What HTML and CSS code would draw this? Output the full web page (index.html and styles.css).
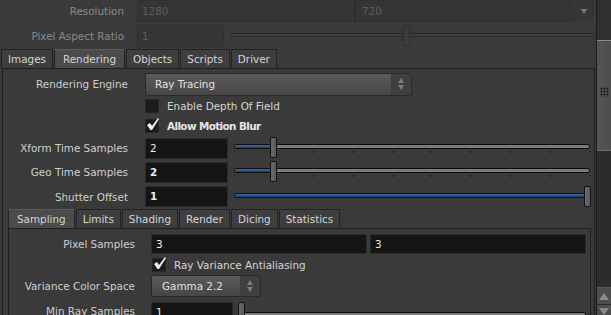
FILE: index.html
```html
<!DOCTYPE html>
<html lang="en">
<head>
    <meta charset="UTF-8">
    <meta name="viewport" content="width=device-width, initial-scale=1.0">
    <title>Mantra Parameters</title>
    <link rel="stylesheet" href="styles.css">
</head>
<body>
<div class="app">
    <div class="main">
        <div class="row top">
            <span class="lbl lbl-top dim">Resolution</span>
            <div class="field off wide">1280</div>
            <div class="field off wide2">720</div>
            <div class="menu-btn off"><span class="tri-down"></span></div>
        </div>
        <div class="row top last">
            <span class="lbl lbl-top dim">Pixel Aspect Ratio</span>
            <div class="field off par">1</div>
            <div class="slider off-slider">
                <div class="track"></div>
                <div class="handle" style="left: 173px"></div>
            </div>
        </div>

        <div class="tabs">
            <div class="tab">Images</div>
            <div class="tab active">Rendering</div>
            <div class="tab">Objects</div>
            <div class="tab">Scripts</div>
            <div class="tab">Driver</div>
        </div>
        <div class="panel">
            <div class="row r24">
                <span class="lbl lbl-a">Rendering Engine</span>
                <div class="dropdown engine">
                    <span class="dd-text">Ray Tracing</span>
                    <span class="spin"><span class="tri-up"></span><span class="tri-down"></span></span>
                </div>
            </div>
            <div class="row check-row c1">
                <span class="box"></span>
                <span class="ctext">Enable Depth Of Field</span>
            </div>
            <div class="row check-row c2">
                <span class="box"><svg width="14" height="13" viewBox="0 0 14 13"><path d="M1 7 L4 5 L6 8 L12 0 L13 1 L6 12 L4.5 12 Z" fill="#f2f2f2"/></svg></span>
                <span class="ctext bold">Allow Motion Blur</span>
            </div>
            <div class="row r24">
                <span class="lbl lbl-a">Xform Time Samples</span>
                <div class="field val short">2</div>
                <div class="slider">
                    <div class="track"><div class="fill" style="width: 38px"></div></div>
                    <div class="ticks"><i></i><i></i><i></i><i></i><i></i><i></i><i></i><i></i><i></i><i></i></div>
                    <div class="handle" style="left: 36px"></div>
                </div>
            </div>
            <div class="row r24">
                <span class="lbl lbl-a">Geo Time Samples</span>
                <div class="field val short bold-val">2</div>
                <div class="slider">
                    <div class="track"><div class="fill" style="width: 38px"></div></div>
                    <div class="ticks"><i></i><i></i><i></i><i></i><i></i><i></i><i></i><i></i><i></i><i></i></div>
                    <div class="handle" style="left: 36px"></div>
                </div>
            </div>
            <div class="row r25">
                <span class="lbl lbl-a">Shutter Offset</span>
                <div class="field val short bold-val">1</div>
                <div class="slider">
                    <div class="track"><div class="fill" style="width: 100%"></div></div>
                    <div class="handle" style="left: 350px"></div>
                </div>
            </div>

            <div class="tabs sub">
                <div class="tab active">Sampling</div>
                <div class="tab">Limits</div>
                <div class="tab">Shading</div>
                <div class="tab">Render</div>
                <div class="tab">Dicing</div>
                <div class="tab">Statistics</div>
            </div>
            <div class="subpanel">
                <div class="row r24">
                    <span class="lbl lbl-b">Pixel Samples</span>
                    <div class="pair">
                        <div class="field val">3</div>
                        <div class="field val">3</div>
                    </div>
                </div>
                <div class="row check-row c3">
                    <span class="box"><svg width="14" height="13" viewBox="0 0 14 13"><path d="M1 7 L4 5 L6 8 L12 0 L13 1 L6 12 L4.5 12 Z" fill="#f2f2f2"/></svg></span>
                    <span class="ctext">Ray Variance Antialiasing</span>
                </div>
                <div class="row r26">
                    <span class="lbl lbl-b">Variance Color Space</span>
                    <div class="dropdown gamma">
                        <span class="dd-text">Gamma 2.2</span>
                        <span class="spin"><span class="tri-up"></span><span class="tri-down"></span></span>
                    </div>
                </div>
                <div class="row r24 minray">
                    <span class="lbl lbl-b">Min Ray Samples</span>
                    <div class="field val short2">1</div>
                    <div class="slider">
                        <div class="track"></div>
                        <div class="handle" style="left: 0px"></div>
                    </div>
                </div>
            </div>
        </div>
    </div>
    <div class="scroll">
        <div class="sb-top"></div>
        <div class="sb-thumb"><span class="grip"></span></div>
        <div class="sb-track"></div>
        <div class="sb-up"><span class="tri-up big"></span></div>
        <div class="sb-down"><span class="tri-down big"></span></div>
    </div>
</div>
</body>
</html>
```

FILE: styles.css
```css
body { margin: 0; background: #3a3a3a; font-family: "DejaVu Sans", sans-serif; font-size: 10.4px; color: #cfcfcf; overflow: hidden; }
.app { display: flex; height: 315px; }
.main { width: 596px; flex: none; }
.row { display: flex; align-items: center; }
.bold { font-weight: bold; letter-spacing: -0.6px; }
.bold-val { font-weight: bold; }

.top { height: 22px; margin-bottom: 3px; }
.top.last { margin-bottom: 0; }
.lbl { text-align: right; flex: none; white-space: nowrap; }
.lbl-top { width: 124px; margin-right: 13px; }
.lbl-a { width: 125px; margin-right: 17px; }
.lbl-b { width: 126px; margin-right: 16px; }
.dim { color: #8a8a8a; }

.field { height: 20px; line-height: 20px; box-sizing: border-box; padding-left: 4px; flex: none; }
.field.off { background: #353535; border: 1px solid #303030; color: #5e5e5e; height: 22px; }
.wide { width: 219px; border-right: 2px solid #2c2c2c !important; }
.wide2 { width: 216px; margin-left: 1px; }
.par { width: 87px; }
.menu-btn { width: 20px; height: 22px; margin-left: 1px; background: #363636; display: flex; align-items: center; justify-content: center; }
.field.val { background: #141414; border: 1px solid #2a2a2a; color: #eeeeee; height: 21px; line-height: 19px; }
.short { width: 83px; }
.short2 { width: 82px; }
.pair { display: flex; gap: 3px; flex: 1; }
.pair .field { flex: 1; height: 20px; line-height: 18px; }

.tri-down, .tri-up { display: block; width: 0; height: 0; border-left: 3px solid transparent; border-right: 3px solid transparent; }
.tri-down { border-top: 5px solid #7d7d7d; }
.tri-up { border-bottom: 5px solid #7d7d7d; }
.tri-down.big { border-left-width: 5px; border-right-width: 5px; border-top: 7px solid #8a8a8a; }
.tri-up.big { border-left-width: 5px; border-right-width: 5px; border-bottom: 7px solid #8a8a8a; }

.slider { position: relative; flex: 1; height: 22px; margin-left: 6px; }
.track { position: absolute; left: 0; right: 0; top: 7px; height: 5px; box-sizing: border-box; background: #7a7a7a; border: 1px solid #0e0e0e; border-radius: 2px; overflow: hidden; }
.fill { height: 100%; background: linear-gradient(#3b6ea6, #1b3f69); }
.ticks { position: absolute; left: 0; right: 0; top: 14px; display: flex; justify-content: space-between; }
.ticks i { display: block; width: 1px; height: 2px; background: #141414; }
.handle { position: absolute; top: 0; width: 7px; height: 21px; box-sizing: border-box; background: linear-gradient(90deg, #6a6a6a, #5a5a5a); border: 1px solid #111; border-radius: 2px; }
.off-slider { margin-left: 6px; }
.off-slider .track { top: 8px; height: 4px; background: #3d3d3d; border-color: #2a2a2a; }
.off-slider .handle { background: #3c3c3c; border-color: #2e2e2e; }

.tabs { display: flex; height: 19px; margin-top: 2px; padding-left: 1px; }
.tab { box-sizing: border-box; height: 19px; line-height: 18px; padding: 0 6px; background: #3e3e3e; border: 1px solid #232323; border-bottom: none; margin-right: 1px; color: #d4d4d4; white-space: nowrap; }
.tab.active { background: #4b4b4b; border-top-color: #5c5c5c; padding: 0 8px; }
.panel { margin: 0 1px 0 2px; border: 1px solid #1f1f1f; border-bottom: none; height: 247px; box-sizing: border-box; padding: 3px 4px 0 0; }
.sub { margin-top: 0; padding-left: 5px; }
.subpanel { margin: 0 -1px 0 5px; border: 1px solid #1f1f1f; border-bottom: none; height: 100px; box-sizing: border-box; padding: 3px 4px 0 0; }

.r24 { height: 24px; }
.r25 { height: 25px; }
.r26 { height: 26px; }
.dropdown { flex: none; height: 23px; box-sizing: border-box; border: 1px solid #2a2a2a; border-radius: 2px; background: linear-gradient(#5b5b5b, #464646); display: flex; align-items: center; color: #e2e2e2; }
.engine { width: 267px; }
.gamma { width: 110px; height: 22px; }
.dd-text { flex: 1; padding-left: 9px; }
.gamma .dd-text { padding-left: 10px; }
.spin { width: 20px; align-self: stretch; background: #3f3f3f; display: flex; flex-direction: column; align-items: center; justify-content: center; gap: 2px; }

.check-row { padding-left: 142px; }
.c1 { height: 20px; }
.c2 { height: 20px; }
.c3 { height: 17px; padding-left: 143px; }
.box { width: 12px; height: 12px; background: #1b1b1b; border: 1px solid #262626; margin-right: 8px; position: relative; flex: none; }
.box svg { position: absolute; left: 0; top: -2px; }
.ctext { color: #d6d6d6; }
.c2 .ctext { color: #e6e6e6; }

.minray { margin-top: 1px; align-items: flex-start; padding-top: 2px; }
.minray .field { height: 21px; }
.minray .lbl { padding-top: 3px; }
.minray .slider { margin-left: 5px; }
.minray .track { top: 10px; }

.scroll { width: 14px; flex: none; border-left: 1px solid #1c1c1c; display: flex; flex-direction: column; background: #2c2c2c; }
.sb-top { height: 40px; background: #2f2f2f; }
.sb-thumb { height: 109px; border-top: 1px solid #8c8c8c; border-bottom: 1px solid #6a6a6a; background: linear-gradient(90deg, #545454, #4e4e4e); position: relative; }
.grip { position: absolute; left: 3px; top: 46px; width: 9px; height: 10px; background-image: radial-gradient(circle, #151515 0.9px, transparent 1.1px); background-size: 3px 3px; }
.sb-track { flex: 1; background: #2c2c2c; }
.sb-up { height: 16px; background: #4c4c4c; border-top: 1px solid #5a5a5a; display: flex; align-items: center; justify-content: center; }
.sb-down { height: 11px; background: #4c4c4c; border-top: 1px solid #2a2a2a; display: flex; justify-content: center; padding-top: 3px; box-sizing: border-box; }
```
